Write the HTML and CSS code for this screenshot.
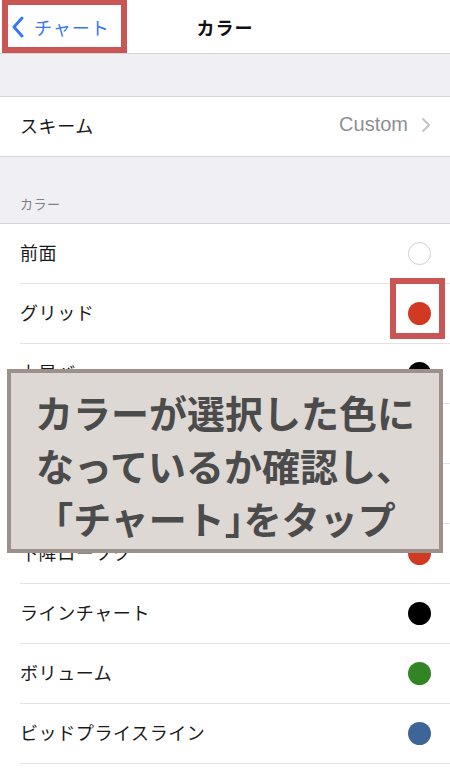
FILE: index.html
```html
<!DOCTYPE html>
<html lang="ja">
<head>
<meta charset="utf-8">
<link rel="stylesheet" href="styles.css">
</head>
<body>
<div class="screen">
  <header class="nav">
    <div class="back">
      <svg class="back-chev" width="14" height="22" viewBox="0 0 14 22"><path d="M11 2 L3 11 L11 20" fill="none" stroke="#3478f6" stroke-width="3" stroke-linecap="round" stroke-linejoin="round"/></svg>
      <span class="back-text">チャート</span>
    </div>
    <div class="title">カラー</div>
  </header>
  <div class="gap-top"></div>
  <div class="group">
    <div class="row scheme">
      <span class="label">スキーム</span>
      <span class="value">Custom</span>
      <svg class="chev" width="10" height="16" viewBox="0 0 10 16"><path d="M2 2 L8 8 L2 14" fill="none" stroke="#c4c4c8" stroke-width="2" stroke-linecap="round" stroke-linejoin="round"/></svg>
    </div>
  </div>
  <div class="section-head">カラー</div>
  <div class="group list">
    <div class="row"><span class="label">前面</span><span class="dot white"></span></div>
    <div class="row"><span class="label">グリッド</span><span class="dot red"></span></div>
    <div class="row"><span class="label">上昇バー</span><span class="dot black"></span></div>
    <div class="row"><span class="label">下降バー</span><span class="dot red"></span></div>
    <div class="row"><span class="label">上昇ローソク</span><span class="dot black"></span></div>
    <div class="row"><span class="label">下降ローソク</span><span class="dot red"></span></div>
    <div class="row"><span class="label">ラインチャート</span><span class="dot black"></span></div>
    <div class="row"><span class="label">ボリューム</span><span class="dot green"></span></div>
    <div class="row"><span class="label">ビッドプライスライン</span><span class="dot blue"></span></div>
    <div class="row"></div>
  </div>

  <div class="hl hl-back"></div>
  <div class="hl hl-dot"></div>
  <div class="note">カラーが選択した色に<br>なっているか確認し、<br><span class="bk">「</span>チャート<span class="bk">」</span>をタップ</div>
</div>
</body>
</html>
```
FILE: styles.css
```css
html, body {
  margin: 0;
  padding: 0;
}
body {
  background: #efeff4;
  font-family: "Noto Sans CJK JP", "Noto Sans", sans-serif;
  color: #111;
}
.screen {
  position: relative;
  width: 450px;
  height: 778px;
  overflow: hidden;
  background: #efeff4;
}
.nav {
  height: 53px;
  background: #fff;
  border-bottom: 1px solid #d6d6da;
  display: flex;
  align-items: center;
  position: relative;
}
.back {
  display: flex;
  align-items: center;
  padding-left: 11px;
  gap: 9px;
}
.back-text {
  color: #3478f6;
  font-size: 18px;
  letter-spacing: 1px;
  font-weight: 400;
}
.title {
  position: absolute;
  left: 0;
  right: 0;
  text-align: center;
  font-size: 18px;
  font-weight: 700;
  letter-spacing: 1px;
  pointer-events: none;
}
.gap-top {
  height: 42px;
}
.group {
  background: #fff;
  border-top: 1px solid #d6d6da;
  border-bottom: 1px solid #d6d6da;
}
.row {
  height: 59px;
  box-sizing: border-box;
  display: flex;
  align-items: center;
  padding: 0 20px 4px;
  font-size: 18px;
  letter-spacing: 0.6px;
}
.label {
  flex: 1;
  color: #1a1a1a;
}
.scheme .value {
  font-family: "Liberation Sans", "Roboto", sans-serif;
  color: #8e8e93;
  font-size: 20px;
  letter-spacing: 0;
  margin-right: 13px;
}
.scheme .chev {
  margin-right: -1px;
}
.section-head {
  height: 66px;
  box-sizing: border-box;
  padding: 37px 20px 0;
  font-size: 13px;
  color: #7f7f84;
  letter-spacing: 0.5px;
}
.list .row {
  height: 60px;
  margin-left: 20px;
  padding-left: 0;
  border-bottom: 1px solid #e2e2e6;
}
.list .row:last-child {
  border-bottom: none;
}
.dot {
  width: 23px;
  height: 23px;
  border-radius: 50%;
  box-sizing: border-box;
  margin-right: -1px;
  margin-bottom: -3px;
}
.dot.white { background: #fff; border: 1px solid #cfcfd3; }
.dot.red { background: #d03a22; }
.dot.black { background: #000; }
.dot.green { background: #328525; }
.dot.blue { background: #3e6598; }

.hl {
  position: absolute;
  border: 6px solid #c95555;
  box-sizing: border-box;
}
.hl-back {
  left: 2px;
  top: -1px;
  width: 125px;
  height: 54px;
}
.hl-dot {
  left: 390px;
  top: 278px;
  width: 55px;
  height: 61px;
}
.note {
  position: absolute;
  left: 7px;
  top: 369px;
  width: 436px;
  height: 184px;
  box-sizing: border-box;
  background: #ddd8d3;
  border: 4px solid #9b918a;
  color: #4b4b4b;
  font-weight: 700;
  font-size: 38px;
  line-height: 53px;
  text-align: center;
  padding-top: 12px;
}
.bk {
  font-feature-settings: "halt";
}
```
